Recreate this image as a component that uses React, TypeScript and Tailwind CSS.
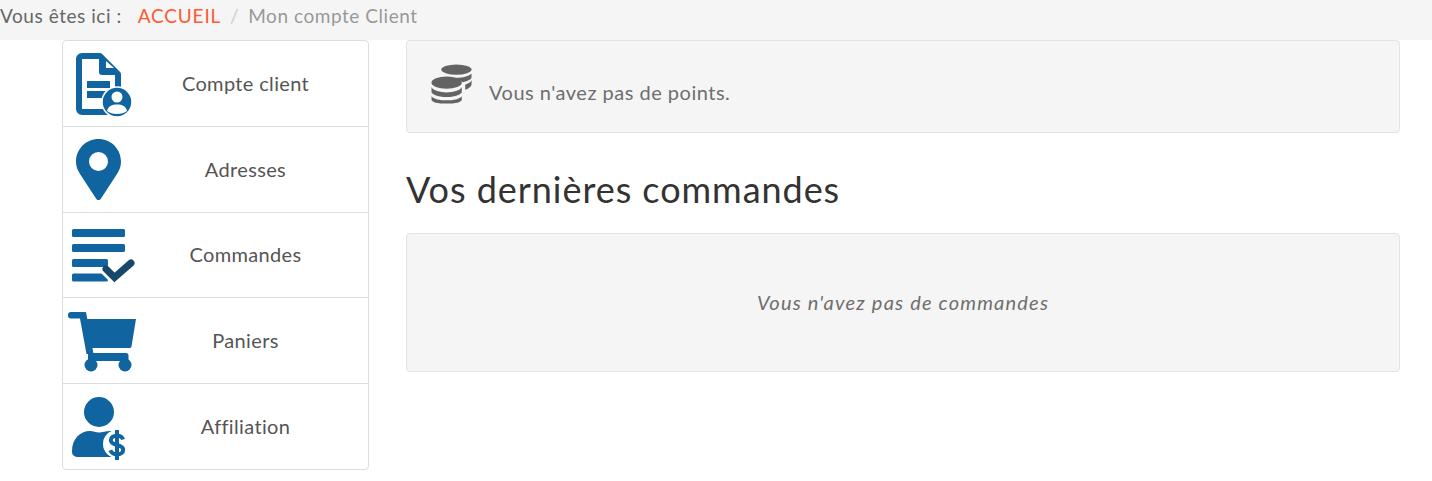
const blue = '#10649f';

function DocIcon() {
  return (
    <svg width="60" height="85" viewBox="0 0 60 85" className="overflow-visible">
      <path d="M19 15h18l18 18v35a3 3 0 0 1-3 3H19a3 3 0 0 1-3-3V18a3 3 0 0 1 3-3z" fill="none" stroke={blue} strokeWidth="6" strokeLinejoin="round" />
      <path d="M36 14l20 19v1H39a3 3 0 0 1-3-3z" fill={blue} />
      <path d="M43 20v7h8z" fill="#fff" />
      <rect x="24" y="40" width="23" height="7" fill={blue} />
      <rect x="24" y="50" width="23" height="7" fill={blue} />
      <circle cx="54" cy="61" r="15" fill={blue} stroke="#fff" strokeWidth="1.500" />
      <circle cx="54" cy="56" r="5.500" fill="#fff" />
      <path d="M44 70c1-5 5-6.500 10-6.500s9 1.500 10 6.500c-2.500 2-6 3-10 3s-7.500-1-10-3z" fill="#fff" />
    </svg>
  );
}

function PinIcon() {
  return (
    <svg width="60" height="85" viewBox="0 0 60 85">
      <path fillRule="evenodd" d="M35.500 12C23 12 13 22 13 34.500c0 5 1.500 8.500 4 12.500l16 24.500c1.200 2 3.800 2 5 0L54 47c2.500-4 4-7.500 4-12.500C58 22 48 12 35.500 12zm0 13a9.500 9.500 0 1 1 0 19 9.500 9.500 0 0 1 0-19z" fill={blue} />
    </svg>
  );
}

function OrdersIcon() {
  return (
    <svg width="60" height="85" viewBox="0 0 60 85" className="overflow-visible">
      <rect x="9" y="16" width="53" height="8" rx="1.500" fill={blue} />
      <rect x="9" y="31" width="53" height="8" rx="1.500" fill={blue} />
      <rect x="9" y="46" width="36" height="8" rx="1.500" fill={blue} />
      <rect x="9" y="60.500" width="36" height="8" rx="1.500" fill={blue} />
      <path d="M42 55.500l9.500 9.500L68 49.500" fill="none" stroke="#fff" strokeWidth="12" />
      <path d="M43 56l8.500 8.500L68 50" fill="none" stroke="#17476b" strokeWidth="7" strokeLinecap="round" />
    </svg>
  );
}

function CartIcon() {
  return (
    <svg width="60" height="85" viewBox="0 0 60 85" className="overflow-visible">
      <rect x="5" y="14" width="18" height="6.500" rx="3" fill={blue} />
      <path d="M16 15l7-1 7.500 42h-7z" fill={blue} />
      <path d="M19.500 21H73l-4.500 27.500a2 2 0 0 1-2 1.500H27z" fill={blue} />
      <path d="M25 55h38a2.500 2.500 0 0 1 2.500 2.500V63H25z" fill={blue} />
      <circle cx="28" cy="67" r="6.500" fill={blue} />
      <circle cx="62" cy="67" r="6.500" fill={blue} />
    </svg>
  );
}

function AffiliateIcon() {
  return (
    <svg width="60" height="85" viewBox="0 0 60 85" className="overflow-visible">
      <circle cx="36" cy="28" r="15" fill={blue} />
      <path d="M9 67c0-12 8-20 18-20 3 0 6 1.500 9 1.500S43 47 47 47h2v26H14a5 5 0 0 1-5-5z" fill={blue} />
      <circle cx="54" cy="60" r="14" fill="#fff" />
      <path d="M60 55.500c-.8-2.600-3-3.800-6-3.800-3.700 0-6.200 1.800-6.200 4.600 0 6.200 12.400 3.200 12.400 9.400 0 3-2.700 4.600-6.200 4.600-3.200 0-5.500-1.400-6.700-4.100" fill="none" stroke={blue} strokeWidth="4" />
      <path d="M54 46v30" fill="none" stroke={blue} strokeWidth="4" />
    </svg>
  );
}

function CoinsIcon() {
  return (
    <svg width="43" height="41" viewBox="0 0 44 44" preserveAspectRatio="none" className="shrink-0">
      <ellipse cx="26" cy="6" rx="15.500" ry="5.500" fill="#636363" />
      <path d="M16 13.500c3 .8 6.500 1.300 10 1.300 6.500 0 12.500-1.700 15.500-4.300v3.500c0 2.500-4 4.500-9 5.500-3.500-3-9-5-16.500-6z" fill="#636363" />
      <path d="M35 22c3-1 6.500-3 6.500-5.500v5c0 2.500-2.500 5-6.500 6z" fill="#636363" />
      <ellipse cx="16" cy="20" rx="15.500" ry="6.500" fill="#636363" />
      <path d="M.5 25c2 3.500 8.500 5.500 15.500 5.500S29.500 28.500 31.500 25v5c0 2-6 5.500-15.500 5.500S.5 32 .5 30z" fill="#636363" />
      <path d="M.5 34.500c2 3 8.500 4.500 15.500 4.500s13.500-1.500 15.500-4.500v3.500c0 3-6.500 4.500-15.500 4.500S.5 41 .5 38z" fill="#636363" />
    </svg>
  );
}

const menu = [
  { label: 'Compte client', icon: <DocIcon />, height: 'h-[86px]' },
  { label: 'Adresses', icon: <PinIcon />, height: 'h-[86px]' },
  { label: 'Commandes', icon: <OrdersIcon />, height: 'h-[85px]' },
  { label: 'Paniers', icon: <CartIcon />, height: 'h-[86px]' },
  { label: 'Affiliation', icon: <AffiliateIcon />, height: 'h-[85px]' },
];

export default function App() {
  return (
    <div className="h-[481px] w-[1432px] overflow-hidden bg-white font-['Lato',sans-serif]">
      <nav className="flex h-10 items-center bg-[#f5f5f5] pb-2 text-[19px] tracking-[0.55px]">
        <span className="text-[#666]">Vous êtes ici :</span>
        <a className="ml-4 tracking-[0.8px] text-[#ff5a33]">ACCUEIL</a>
        <span className="mx-[9px] text-[#ccc]">/</span>
        <span className="text-[#999]">Mon compte Client</span>
      </nav>

      <div className="flex items-start pl-[62px]">
        <aside className="w-[307px] shrink-0 overflow-hidden rounded border border-[#ddd] bg-white">
          {menu.map((item, i) => (
            <div key={item.label} className={`flex items-center ${item.height} ${i < menu.length - 1 ? 'border-b border-[#ddd]' : ''}`}>
              <div className="w-[60px] shrink-0">{item.icon}</div>
              <div className="flex-1 pb-[2px] text-center text-[20px] tracking-[0.35px] text-[#555]">{item.label}</div>
            </div>
          ))}
        </aside>

        <main className="ml-[37px] w-[994px]">
          <div className="flex h-[93px] items-end rounded border border-[#e3e3e3] bg-[#f5f5f5] pb-[27px] pl-6">
            <CoinsIcon />
            <span className="mb-px ml-[15px] text-[20px] leading-6 tracking-[0.5px] text-[#6e6e6e]">Vous n'avez pas de points.</span>
          </div>
          <h2 className="mt-[33px] text-[36px] leading-[46px] tracking-[0.95px] text-[#333]">Vos dernières commandes</h2>
          <div className="mt-[21px] flex h-[139px] items-center justify-center rounded border border-[#e3e3e3] bg-[#f5f5f5] pb-px text-[20px] tracking-[1.2px] text-[#6e6e6e] italic">
            Vous n'avez pas de commandes
          </div>
        </main>
      </div>
    </div>
  );
}
